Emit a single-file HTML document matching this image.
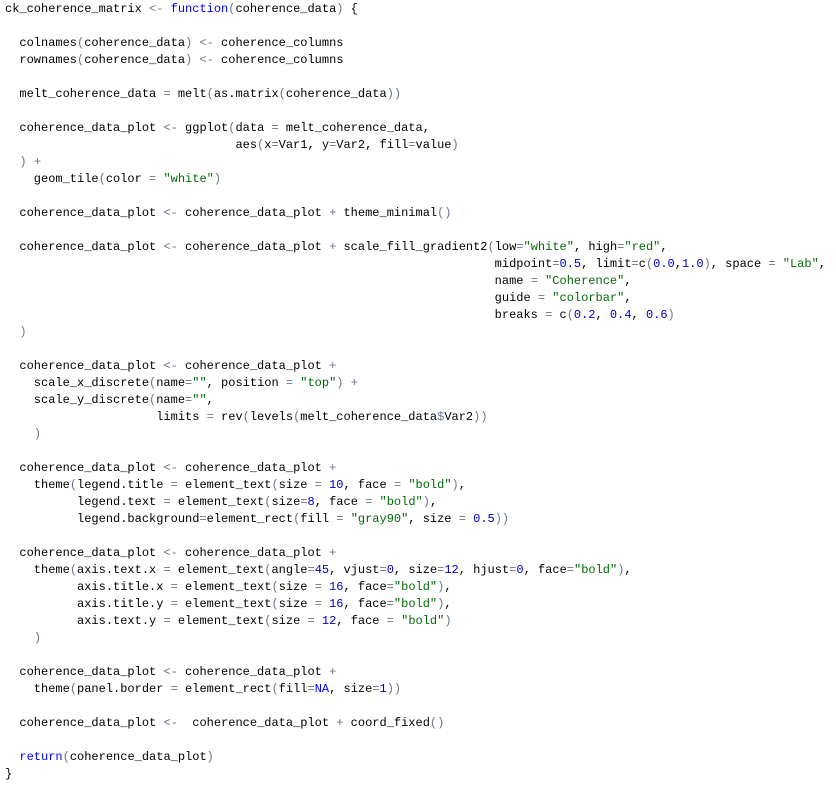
<!DOCTYPE html><html><head><style>
body{margin:0;background:#fff;}
pre{margin:0;padding:1px 0 0 5px;font-family:"Liberation Mono",monospace;font-size:12px;line-height:17px;color:#000;}
.k{color:#0000ff}.n{color:#0000cd}.s{color:#036a07}.o{color:#687687}
</style></head><body><pre>ck_coherence_matrix <span class="o">&lt;-</span> <span class="k">function</span><span class="o">(</span>coherence_data<span class="o">)</span> {

  colnames<span class="o">(</span>coherence_data<span class="o">)</span> <span class="o">&lt;-</span> coherence_columns
  rownames<span class="o">(</span>coherence_data<span class="o">)</span> <span class="o">&lt;-</span> coherence_columns

  melt_coherence_data <span class="o">=</span> melt<span class="o">(</span>as.matrix<span class="o">(</span>coherence_data<span class="o">))</span>

  coherence_data_plot <span class="o">&lt;-</span> ggplot<span class="o">(</span>data <span class="o">=</span> melt_coherence_data,
                                aes<span class="o">(</span>x<span class="o">=</span>Var1, y<span class="o">=</span>Var2, fill<span class="o">=</span>value<span class="o">)</span>
  <span class="o">)</span> <span class="o">+</span>
    geom_tile<span class="o">(</span>color <span class="o">=</span> <span class="s">"white"</span><span class="o">)</span>

  coherence_data_plot <span class="o">&lt;-</span> coherence_data_plot <span class="o">+</span> theme_minimal<span class="o">()</span>

  coherence_data_plot <span class="o">&lt;-</span> coherence_data_plot <span class="o">+</span> scale_fill_gradient2<span class="o">(</span>low<span class="o">=</span><span class="s">"white"</span>, high<span class="o">=</span><span class="s">"red"</span>,
                                                                    midpoint<span class="o">=</span><span class="n">0.5</span>, limit<span class="o">=</span>c<span class="o">(</span><span class="n">0.0</span>,<span class="n">1.0</span><span class="o">)</span>, space <span class="o">=</span> <span class="s">"Lab"</span>,
                                                                    name <span class="o">=</span> <span class="s">"Coherence"</span>,
                                                                    guide <span class="o">=</span> <span class="s">"colorbar"</span>,
                                                                    breaks <span class="o">=</span> c<span class="o">(</span><span class="n">0.2</span>, <span class="n">0.4</span>, <span class="n">0.6</span><span class="o">)</span>
  <span class="o">)</span>

  coherence_data_plot <span class="o">&lt;-</span> coherence_data_plot <span class="o">+</span>
    scale_x_discrete<span class="o">(</span>name<span class="o">=</span><span class="s">""</span>, position <span class="o">=</span> <span class="s">"top"</span><span class="o">)</span> <span class="o">+</span>
    scale_y_discrete<span class="o">(</span>name<span class="o">=</span><span class="s">""</span>,
                     limits <span class="o">=</span> rev<span class="o">(</span>levels<span class="o">(</span>melt_coherence_data<span class="o">$</span>Var2<span class="o">))</span>
    <span class="o">)</span>

  coherence_data_plot <span class="o">&lt;-</span> coherence_data_plot <span class="o">+</span>
    theme<span class="o">(</span>legend.title <span class="o">=</span> element_text<span class="o">(</span>size <span class="o">=</span> <span class="n">10</span>, face <span class="o">=</span> <span class="s">"bold"</span><span class="o">)</span>,
          legend.text <span class="o">=</span> element_text<span class="o">(</span>size<span class="o">=</span><span class="n">8</span>, face <span class="o">=</span> <span class="s">"bold"</span><span class="o">)</span>,
          legend.background<span class="o">=</span>element_rect<span class="o">(</span>fill <span class="o">=</span> <span class="s">"gray90"</span>, size <span class="o">=</span> <span class="n">0.5</span><span class="o">))</span>

  coherence_data_plot <span class="o">&lt;-</span> coherence_data_plot <span class="o">+</span>
    theme<span class="o">(</span>axis.text.x <span class="o">=</span> element_text<span class="o">(</span>angle<span class="o">=</span><span class="n">45</span>, vjust<span class="o">=</span><span class="n">0</span>, size<span class="o">=</span><span class="n">12</span>, hjust<span class="o">=</span><span class="n">0</span>, face<span class="o">=</span><span class="s">"bold"</span><span class="o">)</span>,
          axis.title.x <span class="o">=</span> element_text<span class="o">(</span>size <span class="o">=</span> <span class="n">16</span>, face<span class="o">=</span><span class="s">"bold"</span><span class="o">)</span>,
          axis.title.y <span class="o">=</span> element_text<span class="o">(</span>size <span class="o">=</span> <span class="n">16</span>, face<span class="o">=</span><span class="s">"bold"</span><span class="o">)</span>,
          axis.text.y <span class="o">=</span> element_text<span class="o">(</span>size <span class="o">=</span> <span class="n">12</span>, face <span class="o">=</span> <span class="s">"bold"</span><span class="o">)</span>
    <span class="o">)</span>

  coherence_data_plot <span class="o">&lt;-</span> coherence_data_plot <span class="o">+</span>
    theme<span class="o">(</span>panel.border <span class="o">=</span> element_rect<span class="o">(</span>fill<span class="o">=</span><span class="k">NA</span>, size<span class="o">=</span><span class="n">1</span><span class="o">))</span>

  coherence_data_plot <span class="o">&lt;-</span>  coherence_data_plot <span class="o">+</span> coord_fixed<span class="o">()</span>

  <span class="k">return</span><span class="o">(</span>coherence_data_plot<span class="o">)</span>
}</pre></body></html>
